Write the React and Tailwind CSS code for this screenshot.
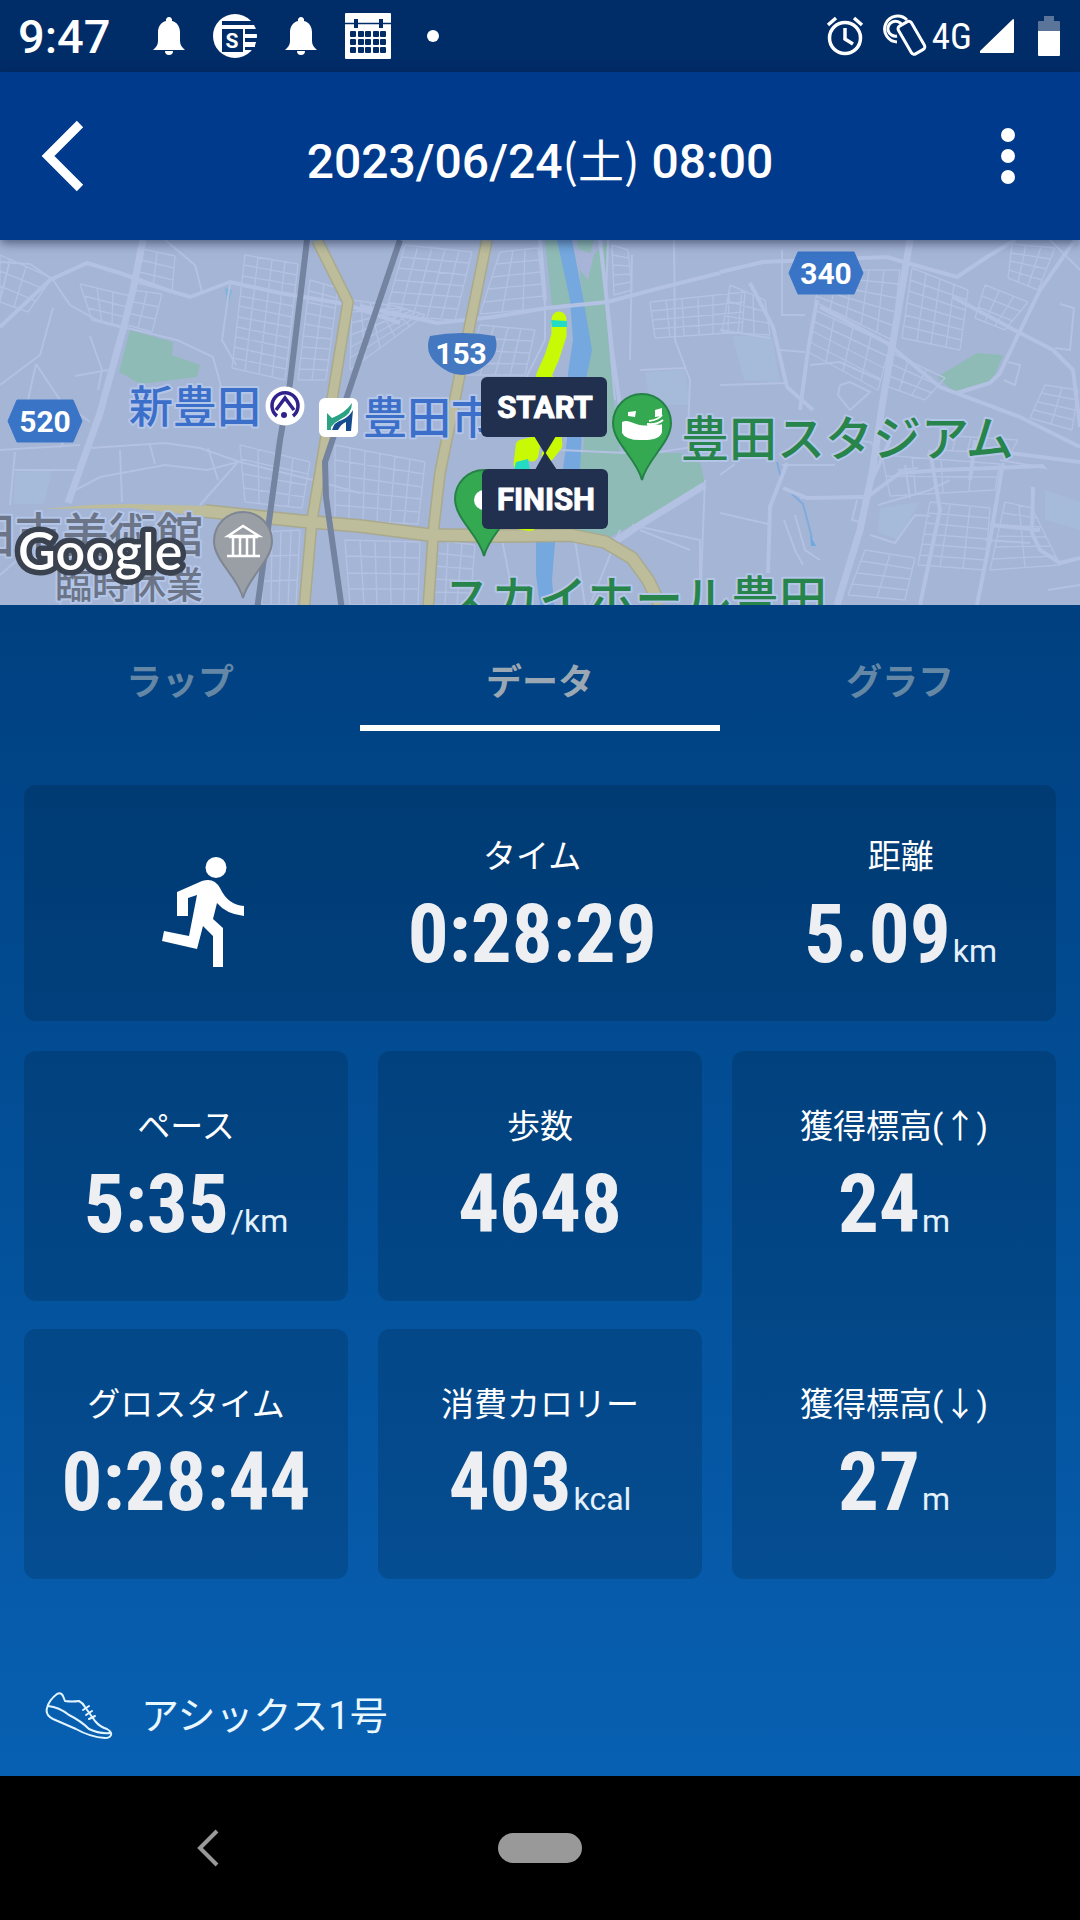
import React from 'react';

const MAP_FONT = "Roboto, 'Noto Sans CJK JP', sans-serif";

// Small street blocks: four corners (clockwise) and the number of rows / columns
const BLOCKS = [
  { p: [[0, 15], [52, 38], [28, 72], [0, 62]], n: 3, m: 2 },
  { p: [[80, 44], [130, 56], [122, 88], [92, 80]], n: 3, m: 3 },
  { p: [[138, 8], [175, 16], [172, 52], [134, 42]], n: 3, m: 2 },
  { p: [[132, 50], [162, 54], [152, 92], [124, 84]], n: 3, m: 2 },
  { p: [[245, 15], [298, 24], [285, 140], [232, 128]], n: 11, m: 4 },
  { p: [[310, 40], [338, 48], [326, 140], [298, 140]], n: 9, m: 2 },
  { p: [[240, 205], [310, 222], [302, 268], [245, 262]], n: 4, m: 4 },
  { p: [[335, 205], [425, 222], [418, 284], [335, 280]], n: 5, m: 6 },
  { p: [[352, 60], [396, 66], [425, 75], [412, 150], [350, 130]], n: 6, m: 5 },
  { p: [[405, 5], [472, 12], [455, 80], [385, 75]], n: 6, m: 5 },
  { p: [[500, 12], [538, 8], [545, 68], [480, 74]], n: 5, m: 3 },
  { p: [[480, 85], [535, 90], [525, 135], [465, 135]], n: 4, m: 4 },
  { p: [[612, 5], [628, 10], [632, 50], [614, 55]], n: 5, m: 1 },
  { p: [[650, 62], [745, 52], [742, 92], [655, 98]], n: 4, m: 6 },
  { p: [[262, 292], [300, 290], [296, 365], [262, 365]], n: 3, m: 4 },
  { p: [[345, 300], [420, 302], [418, 365], [350, 365]], n: 4, m: 5 },
  { p: [[435, 300], [475, 305], [470, 365], [432, 365]], n: 5, m: 3 },
  { p: [[815, 70], [890, 105], [878, 150], [808, 112]], n: 4, m: 4 },
  { p: [[822, 30], [900, 30], [892, 100], [815, 62]], n: 5, m: 5 },
  { p: [[912, 28], [968, 50], [960, 110], [902, 98]], n: 6, m: 4 },
  { p: [[985, 45], [1028, 62], [1005, 90], [975, 78]], n: 3, m: 3 },
  { p: [[1012, 4], [1055, 8], [1038, 50], [1008, 38]], n: 4, m: 3 },
  { p: [[890, 112], [945, 138], [925, 160], [886, 146]], n: 3, m: 3 },
  { p: [[1045, 145], [1078, 150], [1072, 190], [1030, 178]], n: 4, m: 2 },
  { p: [[882, 215], [1000, 224], [995, 250], [890, 256]], n: 2, m: 4 },
  { p: [[930, 262], [990, 268], [985, 330], [918, 325]], n: 6, m: 3 },
  { p: [[1005, 262], [1032, 268], [1060, 325], [990, 330]], n: 6, m: 2 },
  { p: [[865, 310], [915, 318], [905, 360], [848, 355]], n: 4, m: 2 },
  { p: [[730, 45], [765, 60], [770, 95], [722, 92]], n: 3, m: 3 },
  { p: [[940, 195], [1018, 200], [1010, 214], [938, 210]], n: 1, m: 5 },
];

const STREETS = [
  'M0 22L30 24 53 40 70 65 97 80 127 88 177 100 213 117 222 150',
  'M10 20L0 60M53 68L40 115 0 145M36 124L60 160 90 182M36 124L28 160',
  'M90 96L102 130 98 150M75 136L108 130M0 210L80 205M15 230L75 230M15 212L10 265',
  'M60 208L75 180M90 208L165 203 200 208 240 222 313 240 360 253',
  'M68 254L100 237 165 225 207 230 238 222 200 265M120 210L122 262M150 205L155 224',
  'M230 44L222 100 236 125M165 0L195 25 202 52M208 208L218 240',
  'M0 335L40 300M20 290L70 320 60 365',
  'M545 60L545 100 525 140M608 0L606 62 615 160M674 0L675 100 690 140 688 190',
  'M632 15L630 120M640 130L685 128M560 210L627 213 660 212 705 205M705 240L700 365',
  'M632 285L700 300 700 340M640 290L690 310M590 365L620 290M575 300L585 365',
  'M502 300L515 365M720 90L770 98M782 10L782 75 805 75M720 145L785 143M810 125L840 122 880 140',
  'M780 110L805 112M840 145L850 142 870 152 850 170 838 155 840 145',
  'M850 200L870 202 880 210M720 235L735 224M720 273L768 284M782 225L835 225',
  'M784 280L795 310 803 325M795 275L805 310 820 320M800 258L864 256M857 260L852 280 860 282',
  'M878 265L930 250 950 240M870 295L895 303 915 275 930 276M905 225L910 258M898 230L918 228',
  'M1000 220L1045 228 1043 226M1060 64L1074 68 1070 110 1055 108M1008 122L1020 125 1015 145 1004 140',
  'M1048 350L1080 345M985 300L1030 303M1050 0L1080 30',
];

const ROADS = [
  'M0 87L50 40 87 23 120 33 167 50 190 57 230 42 280 53 345 64 400 83',
  'M360 66L437 83 493 77 547 68 607 62 660 48 720 33',
  'M545 60L540 0M607 62L600 0M607 62L612 110 620 165',
  'M720 32L763 22 887 17 907 23 957 37 987 17 1015 0',
  'M750 43L773 87 787 147 813 170M820 67L887 103 940 147 1020 177 1080 207',
  'M953 57L1020 93 1053 110 1073 130 1080 187M1075 0L1040 50 1017 97 1000 133 990 143 957 153',
  'M817 60L808 110 800 170M1010 213L1080 222M1003 223L990 300 977 365',
  'M1033 247L1032 293 1040 310 1060 323 1080 318M787 223L770 267 768 333M783 248L807 258 867 257 900 233 940 230 1044 226',
  'M930 210L940 270 920 365M890 200L872 240M975 200L970 240M1040 290L990 285',
];

const MAIN_ROADS = 'M143 0L133 50 123 90 100 173 68 263M910 0L895 90 883 160 872 233 860 290 837 365M705 245L635 288 610 305';

function lerp(a, b, t) {
  return [Math.round(a[0] + (b[0] - a[0]) * t), Math.round(a[1] + (b[1] - a[1]) * t)];
}

function blockPath({ p, n, m }) {
  const [a, b, c] = p;
  const d = p[p.length - 1];
  let path = '';
  for (let i = 0; i <= n; i++) {
    path += `M${lerp(a, d, i / n)}L${lerp(b, c, i / n)}`;
  }
  for (let i = 0; i <= m; i++) {
    path += `M${lerp(a, b, i / m)}L${lerp(d, c, i / m)}`;
  }
  return path;
}

function MapLabel({ x, y, size, color, halo = '#b4c6e8', anchor = 'start', children }) {
  return (
    <text
      x={x}
      y={y}
      fontSize={size}
      fontWeight="500"
      textAnchor={anchor}
      fill={color}
      stroke={halo}
      strokeWidth="4"
      strokeLinejoin="round"
      paintOrder="stroke"
    >
      {children}
    </text>
  );
}

function RouteNumber({ x, y, children }) {
  return (
    <text x={x} y={y} fontSize="30" fontWeight="700" textAnchor="middle" fill="#fff">
      {children}
    </text>
  );
}

function RouteHexagon({ x, y, children }) {
  return (
    <g>
      <path
        d={`M${x - 28} ${y - 21}h56l9 21l-9 21h-56l-9 -21z`}
        fill="#3a74c6"
        stroke="#3a74c6"
        strokeLinejoin="round"
      />
      <RouteNumber x={x} y={y + 11}>{children}</RouteNumber>
    </g>
  );
}

function Pin({ x, y, fill, edge }) {
  return (
    <path
      d={`M${x} ${y + 57}C${x - 5} ${y + 36} ${x - 29} ${y + 20} ${x - 29} ${y}a29 29 0 0 1 58 0C${x + 29} ${y + 20} ${x + 5} ${y + 36} ${x} ${y + 57}z`}
      fill={fill}
      stroke={edge}
      strokeWidth="2"
    />
  );
}

function RouteMap() {
  return (
    <svg
      viewBox="0 0 1080 365"
      preserveAspectRatio="xMidYMid slice"
      className="block h-[365px] w-full"
      fontFamily={MAP_FONT}
      role="img"
      aria-label="ルート"
    >
      <rect width="1080" height="365" fill="#a5b5d6" />

      {/* areas */}
      <g fill="#a5bbd9">
        <path d="M15 232L52 230 44 264 13 264zM732 96L772 96 780 142 744 140zM880 268L920 262 898 300 878 292zM1045 250L1080 262V290L1045 280zM645 132L685 130 690 165 650 165z" />
      </g>
      <g fill="#8fbbb6">
        <path d="M130 90L173 102 172 115 200 125 197 137 140 144 119 132z" />
        <path d="M545 0H560L576 62 552 66z" />
        <path d="M577 0H594L590 15 592 17 608 0 605 62 614 160 620 213H583L588 120z" />
        <path d="M572 213L680 213 700 220 705 245 637 283 610 297 545 290z" />
        <path d="M937 137L977 113 1003 115 992 143 955 153z" />
      </g>
      <path d="M574 8L594 14 588 40 580 30z" fill="#a8b3d8" />
      <path d="M557 0H572L583 57 592 110 584 150 580 230 566 280 555 303 552 340 554 365H540L536 335 536 303 560 250 567 200 568 133 573 100 570 60z" fill="#74a8de" />
      <path d="M225 48l7 2l-4 15z" fill="#7fb4dc" />
      <path d="M777 222L781 238M792 254L803 264 812 298" stroke="#7fabdf" strokeWidth="2" fill="none" />
      <path d="M810 295l6 11l-5 0z" fill="#6ea9e2" />

      {/* streets */}
      <g fill="none" stroke="#b3c1e2">
        <path d={BLOCKS.map(blockPath).join('')} strokeWidth="1.4" />
        <path d={STREETS.join('')} strokeWidth="2" />
        <path d={ROADS.join('')} strokeWidth="4" />
        <path d={MAIN_ROADS} strokeWidth="7" />
      </g>

      {/* highways */}
      {[['#a9a98d', 12], ['#bdbd9b', 9]].map(([color, width]) => (
        <g key={color} fill="none" stroke={color} strokeWidth={width} strokeLinejoin="round">
          <path d="M317 0L348 62 320 233 312 280 304 370M487 0L440 233 434 285 428 370" />
          <path d="M205 271L300 281 360 286 430 295 500 296 570 295 605 302 632 318 648 340 660 365" strokeWidth={width + 2} />
        </g>
      ))}
      <path d="M40 269L90 265 130 264 210 266 210 277 130 268z" fill="#bdbd9b" />

      {/* railways */}
      <path
        d="M307 0L290 143 280 200 257 370M400 0L360 118 325 222 326 257 342 370"
        fill="none"
        stroke="#74839f"
        strokeWidth="6"
      />

      <MapLabel x={129} y={183} size={44} color="#3b6fca">新豊田</MapLabel>
      <MapLabel x={363} y={194} size={44} color="#3b6fca">豊田市</MapLabel>
      <MapLabel x={681} y={216} size={48} color="#27844a">豊田スタジアム</MapLabel>
      <MapLabel x={443} y={376} size={48} color="#27844a">スカイホール豊田</MapLabel>
      <MapLabel x={203} y={312} size={47} color="#6c7588" anchor="end">田市美術館</MapLabel>
      <MapLabel x={203} y={359} size={37} color="#6c7588" anchor="end">臨時休業</MapLabel>

      <RouteHexagon x={45} y={181}>520</RouteHexagon>
      <RouteHexagon x={826} y={33}>340</RouteHexagon>
      <path d="M430 96Q462 90 495 96Q500 112 488 123Q475 135 462 135Q449 135 436 123Q424 112 430 96z" fill="#4478c0" />
      <RouteNumber x={461} y={124}>153</RouteNumber>

      {/* stations */}
      <circle cx="285" cy="166" r="19.500" fill="#fff" />
      <path d="M277 176a13 13 0 1 1 16 0M276 170L285 158 294 170" fill="none" stroke="#30228c" strokeWidth="3.500" />
      <circle cx="284" cy="175" r="3" fill="#30228c" />
      <rect x="319" y="158" width="39" height="39" rx="6" fill="#fff" />
      <path d="M327 190V173L332 178Q345 173 352 163Q352 174 341 179Q335 182 331 187V190z" fill="#2ba283" />
      <path d="M332 190Q334 182 342 180Q349 177 353 170L351 191H346V182Q341 184 338 190z" fill="#174b8f" />

      {/* museum */}
      <Pin x={243} y={301} fill="#9a9fa6" edge="#7d8692" />
      <path d="M228 296L243 286 259 296zM227 316H260M229 297H258M233 297V315M240 297V315M247 297V315M254 297V315" fill="none" stroke="#fff" strokeWidth="2.500" />

      {/* recorded track */}
      <g fill="none" stroke="#c8fa06" strokeLinejoin="round" strokeLinecap="round">
        <path d="M559 79L559 95 552 117 544 135 540 150" strokeWidth="15" />
        <path d="M548 140L556 205 548 215M522 208L520 224M522 206L534 203 532 215" strokeWidth="13" />
        <path d="M518 282L530 284" strokeWidth="14" />
      </g>
      <path d="M551 80L567 81V87H552zM516 222L528 219 530 230H514z" fill="#24dcc4" />

      <Pin x={642} y={183} fill="#35a852" edge="#258247" />
      <path d="M622 182C630 178 636 188 649 185C656 183 660 186 662 184V192Q660 200 644 200Q626 201 622 193zM628 172l8 -1l-1 6l-7 -1zM655 170l7 -2v8l-7 1z" fill="#fff" />
      <path d="M649 181Q658 180 662 175M647 184Q657 185 663 180" fill="none" stroke="#fff" strokeWidth="2" />
      <Pin x={484} y={259} fill="#35a852" edge="#258247" />
      <circle cx="484" cy="260" r="10" fill="#fff" />

      <g fill="#22304f">
        <rect x="481" y="137" width="126" height="60" rx="6" />
        <path d="M534 196H556L545 214z" />
        <rect x="482" y="229" width="126" height="60" rx="6" />
        <path d="M535 230H557L545 212z" />
      </g>
      <g fontSize="31" fontWeight="700" textAnchor="middle" fill="#fff" stroke="#fff" strokeWidth="1">
        <text x="545" y="178">START</text>
        <text x="546" y="270">FINISH</text>
      </g>

      <text
        x="18"
        y="330"
        fontSize="52"
        fontWeight="600"
        fill="#fff"
        stroke="#3a424f"
        strokeWidth="11"
        strokeLinejoin="round"
        paintOrder="stroke"
        style={{ fontFamily: 'Lato, sans-serif' }}
      >
        Google
      </text>
    </svg>
  );
}

function BellIcon() {
  return (
    <svg viewBox="0 0 32 38" className="h-[38px] w-8" fill="#fff">
      <path d="M16 0a3.200 3.200 0 0 1 3 4C24 5 27 10 27 15V24C27 28 29 30 32 33H0C3 30 5 28 5 24V15C5 10 8 5 13 4A3.200 3.200 0 0 1 16 0zM12 34H20A4 4 0 0 1 12 34z" />
    </svg>
  );
}

function NewsIcon() {
  return (
    <svg viewBox="0 0 44 44" className="size-11">
      <circle cx="22" cy="22" r="22" fill="#fff" />
      <path d="M9 7H44V11H9zM9 15H30V38H9zM32 15H44V20H32zM32 24H44V28H32zM32 33H44V36H32z" fill="#002c68" />
      <path d="M32 20H43V24H32zM32 28H42V33H32z" fill="#fff" />
      <text x="19" y="34" fontSize="21" fontWeight="700" textAnchor="middle" fill="#fff" fontFamily="Roboto, sans-serif">S</text>
    </svg>
  );
}

function CalendarIcon() {
  return (
    <svg viewBox="0 0 46 46" className="size-[46px]">
      <rect width="46" height="46" rx="1" fill="#fff" />
      <path d="M0 10.500H46" stroke="#002c68" strokeWidth="1.500" />
      <path d="M9 6h4v9h-4zM34 6h4v9h-4z" fill="#002c68" />
      {[18, 26, 34].map((y) => [5, 13, 20, 28, 35].map((x) => (
        <rect key={`${x}-${y}`} x={x} y={y} width="6" height="6" rx="1" fill="#002c68" />
      )))}
    </svg>
  );
}

function StatusBar() {
  return (
    <div className="flex h-18 items-center justify-between bg-[#002c68] pr-5 pl-[18px] text-white">
      <div className="flex items-center">
        <span className="text-[47px] leading-none font-medium">9:47</span>
        <div className="ml-[42px] flex items-center gap-7">
          <BellIcon />
          <NewsIcon />
          <BellIcon />
          <CalendarIcon />
        </div>
        <span className="ml-9 size-3 rounded-full bg-white" />
      </div>
      <div className="flex items-center">
        <svg viewBox="0 0 38 40" className="h-10 w-[38px]" fill="none" stroke="#fff" strokeWidth="3.500">
          <circle cx="19" cy="22" r="15.500" />
          <path d="M2 9L10 2M28 2L36 9M19 12V23L27 28" />
        </svg>
        <svg viewBox="0 0 46 44" className="ml-[18px] h-11 w-[46px]" fill="none" stroke="#fff" strokeWidth="3">
          <path d="M15 28A13 13 0 1 1 25 6M15 22A7.500 7.500 0 1 1 20 11" />
          <rect x="22" y="8" width="15" height="32" rx="3" transform="rotate(-30 29 24)" />
        </svg>
        <span className="ml-1 font-['Roboto_Condensed',Roboto,sans-serif] text-[37px] leading-none">4G</span>
        <svg viewBox="0 0 34 34" className="ml-2 size-[34px]" fill="#fff">
          <path d="M33 0Q34 0 34 1V33Q34 34 33 34H1Q-1 34 0 32L32 1z" />
        </svg>
        <svg viewBox="0 0 22 40" className="ml-6 h-10 w-[22px]">
          <path d="M6 0H16V5H21Q22 5 22 6V16H0V6Q0 5 1 5H6z" fill="#5b7499" />
          <path d="M0 15H22V39Q22 40 21 40H1Q0 40 0 39z" fill="#fff" />
        </svg>
      </div>
    </div>
  );
}

function Header() {
  return (
    <header className="relative z-10 flex h-42 items-center justify-between bg-[#003a8c] px-9 text-white shadow-[0_3px_10px_rgba(20,30,60,0.6)]">
      <button type="button" aria-label="戻る" className="flex w-[72px] justify-start pl-1">
        <svg viewBox="0 0 44 72" className="h-[72px] w-11" fill="none" stroke="#fff" strokeWidth="9">
          <path d="M40 4L8 36 40 68" />
        </svg>
      </button>
      <h1 className="pt-2 text-[48px] leading-none font-medium">
        2023/06/24<span className="font-['Noto_Sans_CJK_JP',sans-serif] text-[46px] font-normal">(土)</span> 08:00
      </h1>
      <button type="button" aria-label="メニュー" className="flex w-[72px] flex-col items-center gap-[7px]">
        <span className="size-[14px] rounded-full bg-white" />
        <span className="size-[14px] rounded-full bg-white" />
        <span className="size-[14px] rounded-full bg-white" />
      </button>
    </header>
  );
}

function Tabs() {
  const tabs = ['ラップ', 'データ', 'グラフ'];
  return (
    <div role="tablist" className="grid grid-cols-3">
      {tabs.map((tab, index) => (
        <button
          key={tab}
          type="button"
          role="tab"
          aria-selected={index === 1}
          className={`border-b-6 pt-13 pb-4 text-[36px] leading-[52px] font-bold ${index === 1 ? 'border-white text-[#9ba8b3]' : 'border-transparent text-[#6587a6]'}`}
        >
          {tab}
        </button>
      ))}
    </div>
  );
}

function Metric({ label, value, unit }) {
  return (
    <div className="flex flex-col items-center">
      <div className="text-[33px] leading-10 text-white">{label}</div>
      <div className="mt-4 flex h-[84px] items-baseline gap-[2px] leading-[84px]">
        <span className="font-['Roboto_Condensed',Roboto,sans-serif] text-[81px] font-bold text-[#eeeff2]">{value}</span>
        {unit && <span className="text-[32px] text-[#e4f1fa]">{unit}</span>}
      </div>
    </div>
  );
}

function Card({ className, children }) {
  return (
    <div className={`rounded-xl bg-black/14 ${className || ''}`}>
      {children}
    </div>
  );
}

function RunnerIcon() {
  return (
    <svg viewBox="0 0 82 111" className="h-[111px] w-[82px]" fill="#fff" aria-label="ランニング">
      <circle cx="54" cy="10.500" r="10.500" />
      <path d="M15 35L40 24Q52 20 58 31Q66 48 82 49V59Q64 57 55 46L51 62 61 71V110H51V79L41 69 35 92 0 84 2 74 27 79 35 38 26 41V59H15z" />
    </svg>
  );
}

function ShoeIcon() {
  return (
    <svg viewBox="0 0 68 48" className="h-12 w-[68px]" fill="none" stroke="#e2f4ff" strokeWidth="2" strokeLinejoin="round" strokeLinecap="round">
      <path d="M12 2Q16 0 18 4L20 9Q27 10 34 9Q38 11 40 15L50 29Q55 35 62 37Q67 40 66 43Q65 46 60 46Q45 45 31 37L8 27Q0 23 2 16Q4 8 12 2z" />
      <path d="M3 14Q14 15 24 23Q36 29 44 37Q54 42 65 41M38 18L44 14M41 23L47 19M44 27L50 24" />
    </svg>
  );
}

export default function App() {
  return (
    <div className="flex min-h-screen flex-col bg-black font-[Roboto,'Noto_Sans_CJK_JP',sans-serif]">
      <StatusBar />
      <Header />
      <RouteMap />

      <main className="flex grow flex-col bg-linear-to-b from-[#004080] to-[#0860b2]">
        <Tabs />

        <div className="mt-[54px] px-6">
          <Card className="flex items-start justify-between pt-13 pr-[59px] pb-11 pl-[138px]">
            <div className="pt-5 pr-4">
              <RunnerIcon />
            </div>
            <Metric label="タイム" value="0:28:29" />
            <Metric label="距離" value="5.09" unit="km" />
          </Card>

          <div className="mt-[30px] grid grid-cols-3 gap-x-[30px] gap-y-7">
            <Card className="pt-14 pb-[54px]">
              <Metric label="ペース" value="5:35" unit="/km" />
            </Card>
            <Card className="pt-14 pb-[54px]">
              <Metric label="歩数" value="4648" />
            </Card>
            <Card className="row-span-2 flex flex-col justify-between pt-14 pb-[54px]">
              <Metric label="獲得標高(↑)" value="24" unit="m" />
              <Metric label="獲得標高(↓)" value="27" unit="m" />
            </Card>
            <Card className="pt-14 pb-[54px]">
              <Metric label="グロスタイム" value="0:28:44" />
            </Card>
            <Card className="pt-14 pb-[54px]">
              <Metric label="消費カロリー" value="403" unit="kcal" />
            </Card>
          </div>
        </div>

        <div className="mt-auto flex items-center gap-7 pb-[34px] pl-[45px] text-[38px] leading-[52px] text-[#e9f7ff]">
          <ShoeIcon />
          <span>アシックス1号</span>
        </div>
      </main>

      <nav className="grid h-36 grid-cols-3 items-center justify-items-center bg-black">
        <button type="button" aria-label="戻る" className="ml-14">
          <svg viewBox="0 0 24 38" className="h-[38px] w-6" fill="none" stroke="#999" strokeWidth="4">
            <path d="M21 2L4 19 21 36" />
          </svg>
        </button>
        <button type="button" aria-label="ホーム" className="h-[30px] w-[84px] rounded-full bg-[#999]" />
      </nav>
    </div>
  );
}
